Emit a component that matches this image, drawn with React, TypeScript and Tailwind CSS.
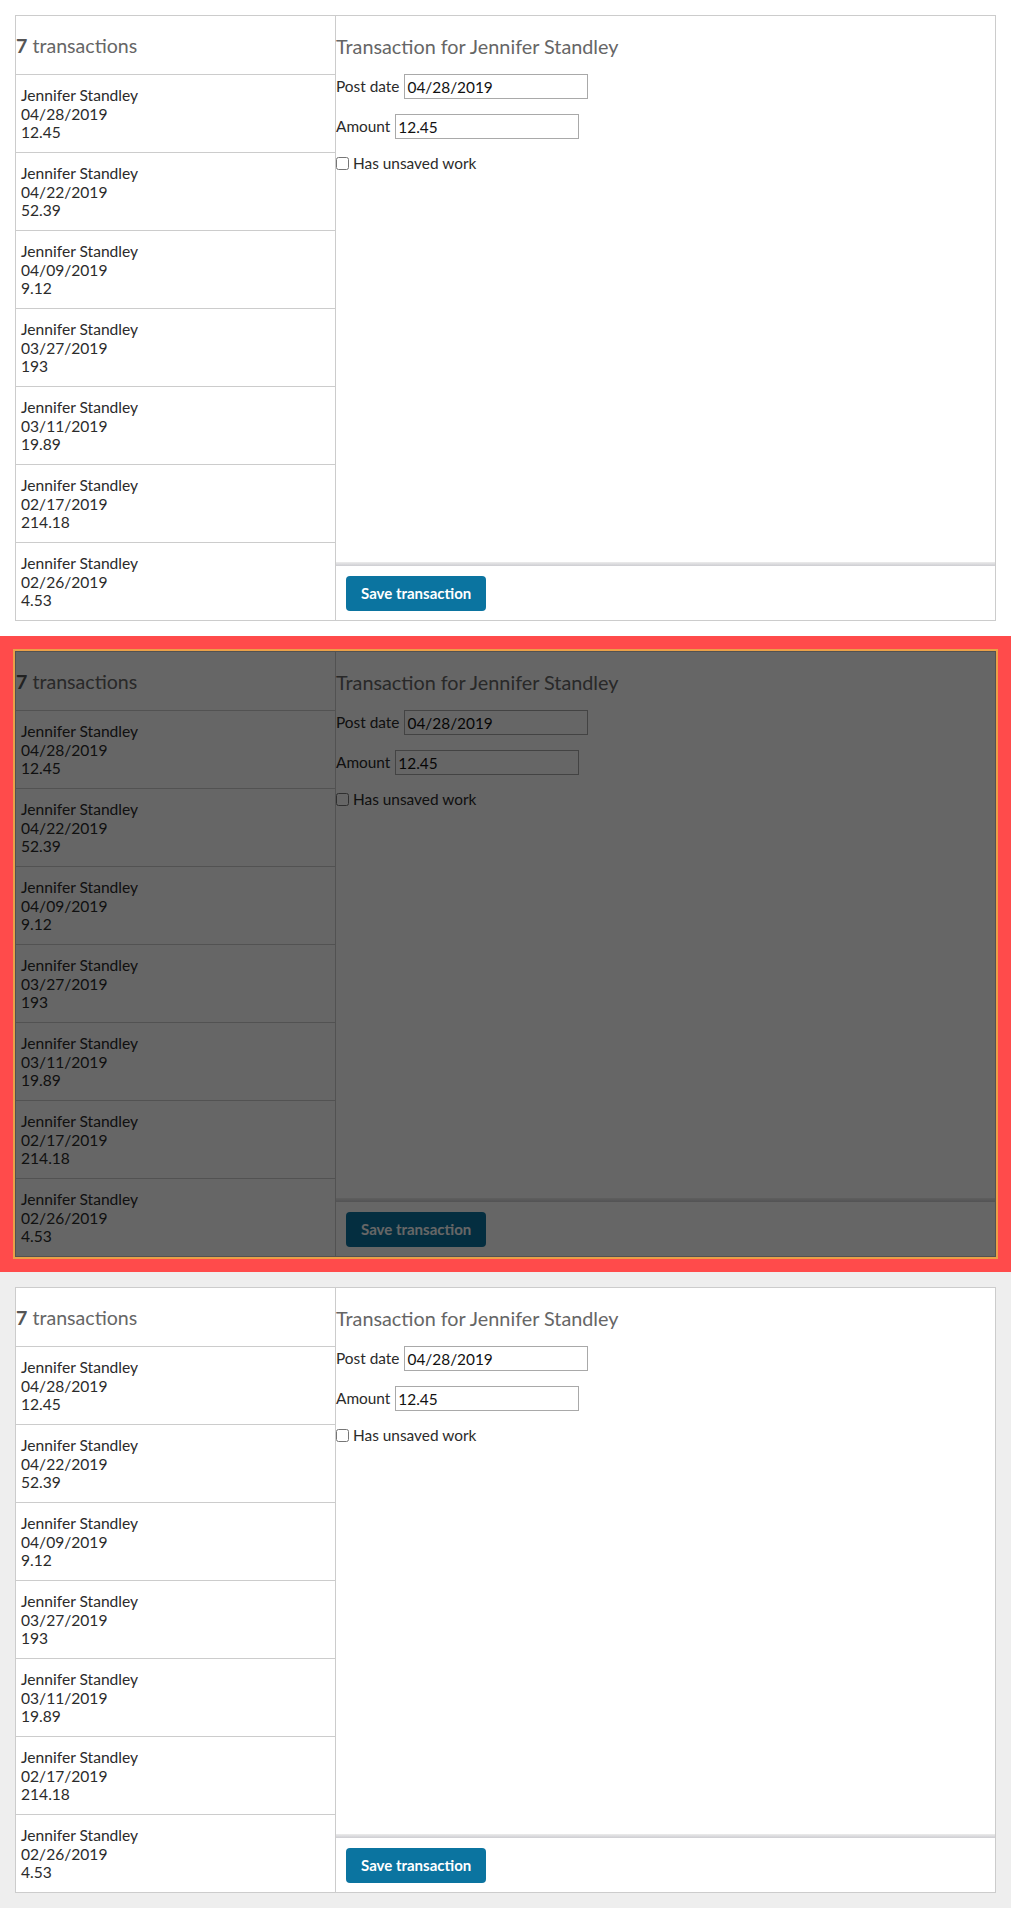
import React from 'react';

interface Transaction {
  name: string;
  date: string;
  amount: string;
}

const transactions: Transaction[] = [
  { name: 'Jennifer Standley', date: '04/28/2019', amount: '12.45' },
  { name: 'Jennifer Standley', date: '04/22/2019', amount: '52.39' },
  { name: 'Jennifer Standley', date: '04/09/2019', amount: '9.12' },
  { name: 'Jennifer Standley', date: '03/27/2019', amount: '193' },
  { name: 'Jennifer Standley', date: '03/11/2019', amount: '19.89' },
  { name: 'Jennifer Standley', date: '02/17/2019', amount: '214.18' },
  { name: 'Jennifer Standley', date: '02/26/2019', amount: '4.53' },
];

/**
 * Transaction editor - list on the left, form for the selected one on the right.
 */
function TransactionPanel() {
  const selected = transactions[0];

  return (
    <div className="flex h-[606px] border border-[#cccccc] bg-white font-['Lato','Liberation_Sans',sans-serif] text-[#2b2b2b]">
      {/* Transaction list */}
      <div className="flex w-[320px] shrink-0 flex-col border-r border-[#cccccc]">
        <div className="flex h-[59px] shrink-0 items-center border-b border-[#cccccc] pt-[2px] text-[19.6px] text-[#666666]">
          <span className="font-bold text-[#555555]">{transactions.length}</span>
          <span>&nbsp;transactions</span>
        </div>
        {transactions.map((t, i) => (
          <div
            key={i}
            className="h-[78px] shrink-0 border-b border-[#cccccc] px-[5px] pt-[11px] text-[15.6px] leading-[18.5px] last:border-b-0"
          >
            <div>{t.name}</div>
            <div>{t.date}</div>
            <div>{t.amount}</div>
          </div>
        ))}
      </div>

      {/* Transaction form */}
      <div className="flex min-w-0 flex-1 flex-col">
        <div className="flex-1 pt-[18px]">
          <h2 className="text-[19.8px] leading-[24px] text-[#666666]">Transaction for {selected.name}</h2>
          <div className="mt-[16px] flex h-[25px] items-center text-[15.4px]">
            <span>Post date</span>
            <input
              readOnly
              value={selected.date}
              className="ml-[5px] h-[25px] w-[184px] border border-[#a9a9a9] px-[2px] text-[15.4px] text-[#111111] outline-none"
            />
          </div>
          <div className="mt-[15px] flex h-[25px] items-center text-[15.4px]">
            <span>Amount</span>
            <input
              readOnly
              value={selected.amount}
              className="ml-[5px] h-[25px] w-[184px] border border-[#a9a9a9] px-[2px] text-[15.4px] text-[#111111] outline-none"
            />
          </div>
          <label className="mt-[16px] flex h-[17px] items-center text-[15.4px]">
            <input type="checkbox" className="m-0 mr-[4px] h-[13px] w-[13px]" />
            <span>Has unsaved work</span>
          </label>
        </div>
        <div className="h-[4px] shrink-0 bg-gradient-to-b from-[#ececec] to-[#cdcdd2]" />
        <div className="shrink-0 px-[10px] pt-[10px] pb-[9px]">
          <button className="h-[35px] rounded-[4px] bg-[#0b74a0] px-[15px] text-[15px] font-bold text-white">
            Save transaction
          </button>
        </div>
      </div>
    </div>
  );
}

export default function App() {
  return (
    <div className="w-[1011px]">
      {/* Default */}
      <div className="bg-white p-[15px]">
        <TransactionPanel />
      </div>

      {/* Highlighted / disabled */}
      <div className="bg-[#ff4b4b] p-[15px]">
        <div className="relative outline-2 outline-[#eaa048]">
          <TransactionPanel />
          <div className="absolute inset-0 bg-black/60" />
        </div>
      </div>

      {/* On gray */}
      <div className="bg-[#eeeeee] p-[15px]">
        <TransactionPanel />
      </div>
    </div>
  );
}
